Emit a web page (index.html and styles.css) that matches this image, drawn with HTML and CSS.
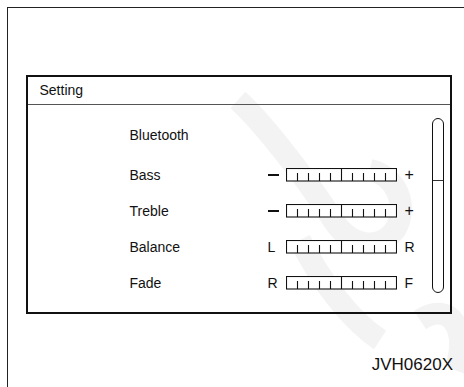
FILE: index.html
```html
<!DOCTYPE html>
<html>
<head>
<meta charset="utf-8">
<link rel="stylesheet" href="styles.css">
</head>
<body>
<div class="frame">
  <svg class="watermark" width="464" height="387" viewBox="0 0 464 387">
    <path d="M238 100 C 260 120, 300 170, 330 215" />
    <path d="M330 215 C 350 250, 380 250, 395 230 C 410 205, 395 175, 370 170" />
    <path d="M300 240 C 320 280, 350 320, 380 340" />
    <path d="M420 320 C 450 300, 470 330, 455 370" />
  </svg>
  <div class="panel">
    <div class="header">Setting</div>
    <div class="body">
      <div class="rows">
        <div class="row first"><span class="label">Bluetooth</span></div>
        <div class="row">
          <span class="label">Bass</span>
          <span class="sign"><i class="minus"></i></span>
          <svg class="bar" width="111" height="14" viewBox="0 0 111 14"><rect x="0.5" y="0.5" width="110" height="12.5"/><path d="M11.5 13V5M22.5 13V5M33.5 13V5M44.5 13V5M55.5 13V1M66.5 13V5M77.5 13V5M88.5 13V5M99.5 13V5"/></svg>
          <span class="sign end plus">+</span>
        </div>
        <div class="row">
          <span class="label">Treble</span>
          <span class="sign"><i class="minus"></i></span>
          <svg class="bar" width="111" height="14" viewBox="0 0 111 14"><rect x="0.5" y="0.5" width="110" height="12.5"/><path d="M11.5 13V5M22.5 13V5M33.5 13V5M44.5 13V5M55.5 13V1M66.5 13V5M77.5 13V5M88.5 13V5M99.5 13V5"/></svg>
          <span class="sign end plus">+</span>
        </div>
        <div class="row">
          <span class="label">Balance</span>
          <span class="sign">L</span>
          <svg class="bar" width="111" height="14" viewBox="0 0 111 14"><rect x="0.5" y="0.5" width="110" height="12.5"/><path d="M11.5 13V5M22.5 13V5M33.5 13V5M44.5 13V5M55.5 13V1M66.5 13V5M77.5 13V5M88.5 13V5M99.5 13V5"/></svg>
          <span class="sign end">R</span>
        </div>
        <div class="row">
          <span class="label">Fade</span>
          <span class="sign">R</span>
          <svg class="bar" width="111" height="14" viewBox="0 0 111 14"><rect x="0.5" y="0.5" width="110" height="12.5"/><path d="M11.5 13V5M22.5 13V5M33.5 13V5M44.5 13V5M55.5 13V1M66.5 13V5M77.5 13V5M88.5 13V5M99.5 13V5"/></svg>
          <span class="sign end">F</span>
        </div>
      </div>
      <div class="scroll">
        <div class="thumb"></div>
      </div>
    </div>
  </div>
  <div class="code">JVH0620X</div>
</div>
</body>
</html>
```
FILE: styles.css
```css
html, body {
  margin: 0;
  padding: 0;
  background: #fff;
}
body {
  width: 464px;
  height: 387px;
  overflow: hidden;
  font-family: "Liberation Sans", Arial, sans-serif;
  color: #111;
}
.frame {
  position: relative;
  margin: 7px 0 0 7px;
  height: 380px;
  border-left: 1.5px solid #222;
  border-top: 1.5px solid #222;
  padding: 66.5px 0 0 17.5px;
  box-sizing: border-box;
}
.watermark {
  position: absolute;
  left: -8.5px;
  top: -8.5px;
  fill: none;
  stroke: #f3f3f3;
  stroke-width: 22;
  stroke-linecap: butt;
}
.panel {
  position: relative;
  width: 426px;
  height: 239px;
  border: 2px solid #111;
  box-sizing: border-box;
  display: flex;
  flex-direction: column;
}
.header {
  height: 27px;
  border-bottom: 1px solid #555;
  font-size: 14px;
  line-height: 27px;
  padding-left: 12px;
}
.body {
  flex: 1;
  display: flex;
  padding-left: 102px;
}
.rows {
  display: flex;
  flex-direction: column;
  padding-top: 8px;
  width: 300px;
}
.row {
  display: flex;
  align-items: center;
  height: 36px;
  font-size: 14px;
}
.row.first {
  height: 44px;
}
.label {
  width: 138px;
}
.sign {
  width: 18px;
  display: flex;
  align-items: center;
}
.minus {
  display: block;
  width: 11px;
  height: 2px;
  background: #111;
}
.plus {
  font-size: 16px;
}
.bar {
  display: block;
  fill: none;
  stroke: #111;
  stroke-width: 1.1;
}
.bar rect {
  fill: #fff;
}
.sign.end {
  margin-left: 8px;
}
.scroll {
  position: relative;
  margin-top: 13px;
  margin-left: 2px;
  width: 12px;
  height: 175px;
  border: 1.2px solid #111;
  border-radius: 6px;
  box-sizing: border-box;
}
.thumb {
  height: 61px;
  border-bottom: 1px solid #333;
}
.code {
  position: absolute;
  right: 11px;
  top: 347px;
  font-size: 17px;
}
```
